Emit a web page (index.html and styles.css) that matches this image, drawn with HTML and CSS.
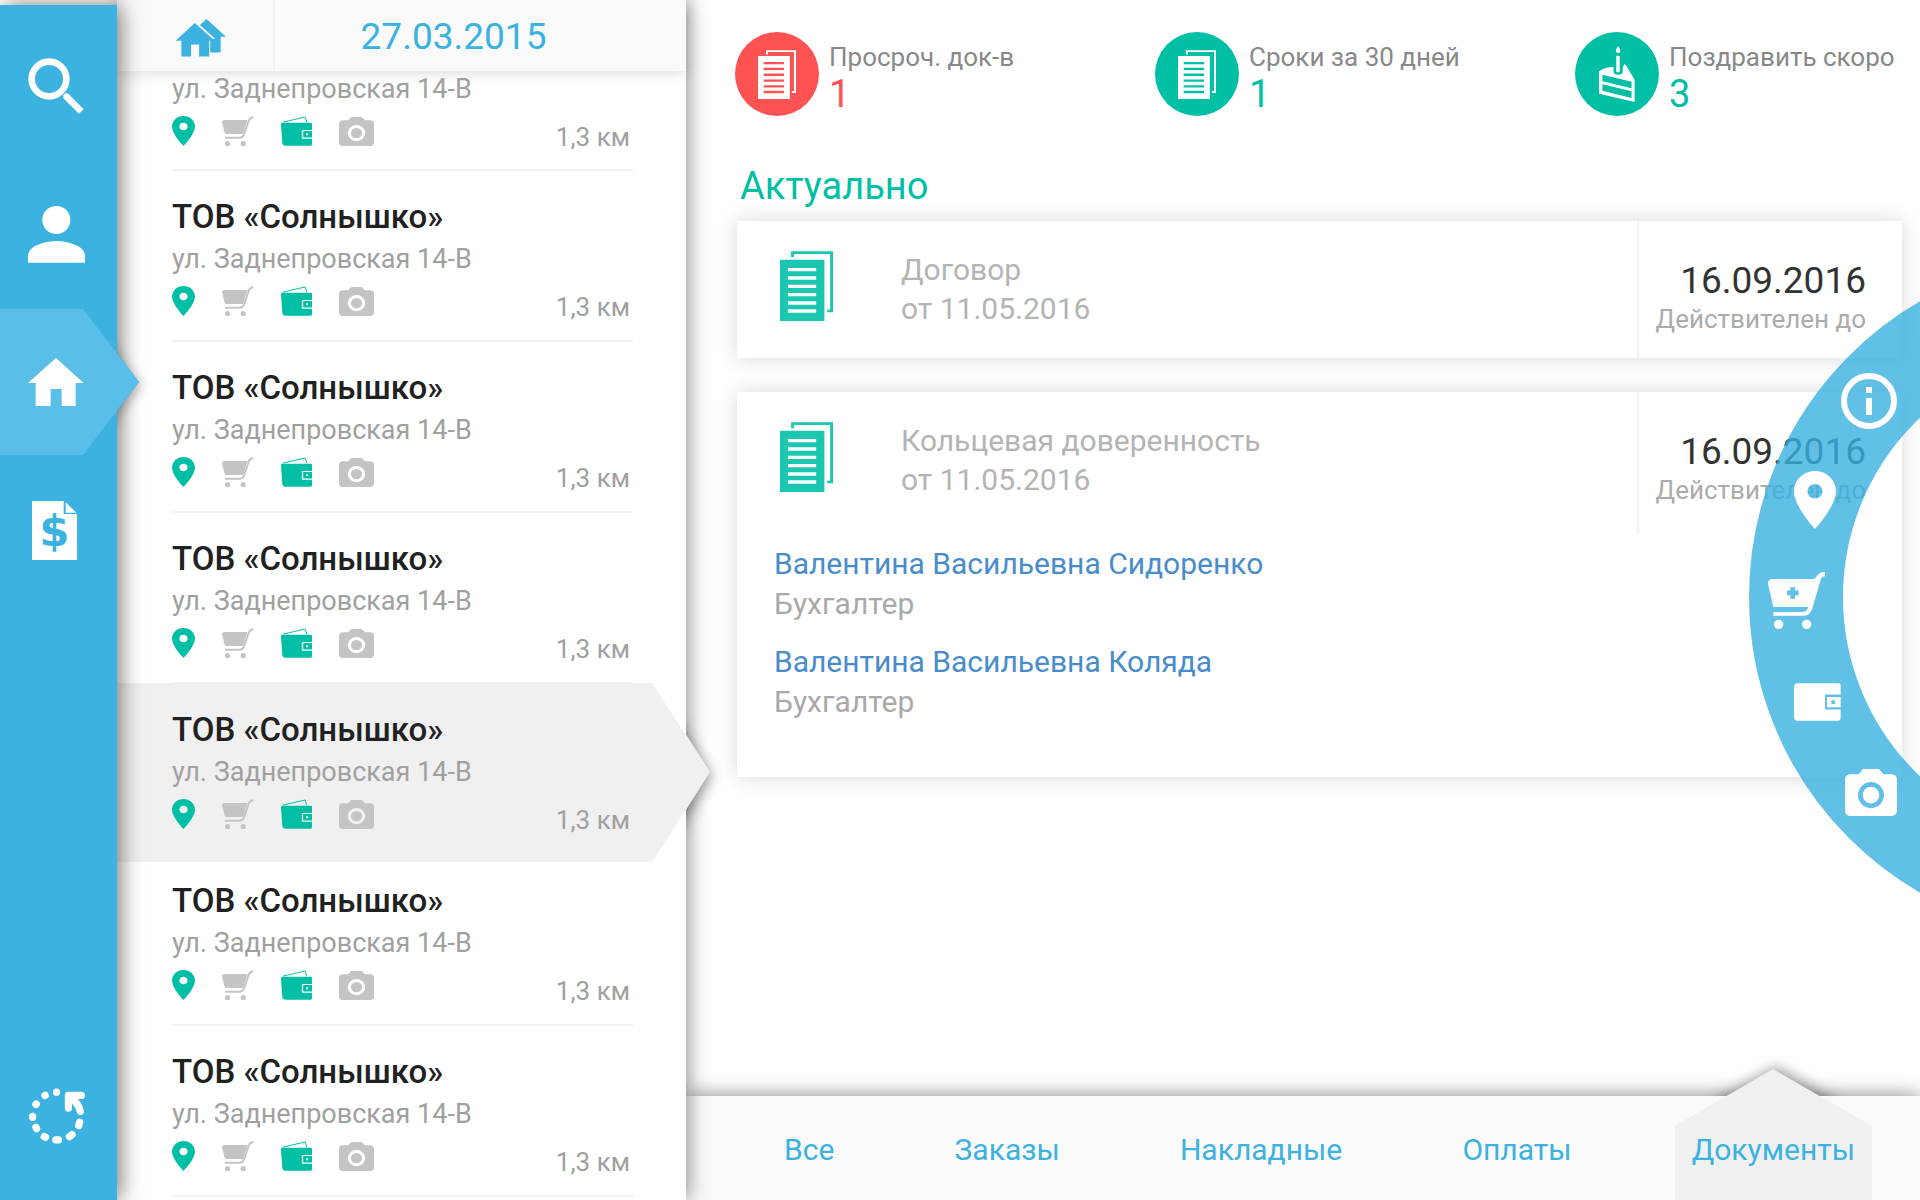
FILE: index.html
```html
<!DOCTYPE html>
<html lang="ru">
<head>
<meta charset="utf-8">
<meta name="viewport" content="width=device-width, initial-scale=1">
<title>Документы</title>
<link rel="stylesheet" href="styles.css">
</head>
<body>
<svg class="sprite" aria-hidden="true">
  <symbol id="pin" viewBox="5 2 14 20" preserveAspectRatio="none"><path d="M12 2C8.13 2 5 5.13 5 9c0 5.25 7 13 7 13s7-7.75 7-13c0-3.87-3.13-7-7-7zm0 9.5c-1.38 0-2.5-1.12-2.5-2.5s1.12-2.5 2.5-2.5 2.5 1.12 2.5 2.5-1.12 2.5-2.5 2.5z"/></symbol>
  <symbol id="cart" viewBox="664 348 99 92"><path d="M674 360H744L731 403H680Q675 403 674 399L666 368Q666 360 674 360Z"/><path d="M762 352Q752 352 748 362L734 404Q730 415 720 415H675" fill="none" stroke="currentColor" stroke-width="6"/><circle cx="683" cy="433" r="8"/><circle cx="731" cy="433" r="8"/></symbol>
  <symbol id="wallet" viewBox="840 347 97 92"><path d="M846 368H932q4 0 4 4V390H905V417H936V434q0 4-4 4H855Q846 438 845 430L841 374Q840 368 846 368Z"/><path fill-rule="evenodd" d="M909 393h27v20h-27zM918 400v6h6v-6z"/><path d="M846 366L915 350L920 366" fill="none" stroke="currentColor" stroke-width="3"/></symbol>
  <symbol id="camera" viewBox="2 2 20 18" preserveAspectRatio="none"><path fill-rule="evenodd" d="M9 2L7.170 4H4c-1.100 0-2 .9-2 2v12c0 1.100.9 2 2 2h16c1.100 0 2-.9 2-2V6c0-1.100-.9-2-2-2h-3.170L15 2H9zM12 7a5 5 0 1 1 0 10a5 5 0 1 1 0-10z"/><circle cx="12" cy="12" r="3.200"/></symbol>
  <symbol id="docs" viewBox="168 122 148 210" preserveAspectRatio="none"><path fill-rule="evenodd" d="M168 148H292V332H168ZM190 173V183H269V173ZM190 198V208H269V198ZM190 223V233H269V223ZM190 248V258H269V248ZM190 273V283H269V273ZM190 297V307H269V297Z"/><path d="M203 141V127H312V302H300" fill="none" stroke="currentColor" stroke-width="8"/></symbol>
</svg>

<div class="app">
  <nav class="rail" aria-label="Разделы">
    <button class="rail-item" aria-label="Поиск"><svg width="56" height="56" viewBox="84 174 168 168"><circle cx="147" cy="237" r="52" fill="none" stroke="currentColor" stroke-width="20"/><path d="M190 284L198 279L205 281L251 328L237 341L190 295Z"/></svg></button>
    <button class="rail-item" aria-label="Профиль"><svg width="57" height="57" viewBox="84 624 171 171"><circle cx="169" cy="666" r="42"/><path d="M84 794V772Q86 747 130 734Q169 724 208 734Q253 747 255 772V794Z"/></svg></button>
    <button class="rail-item is-active" aria-label="Торговые точки" aria-current="page"><svg width="56" height="48" viewBox="85 204 168 144"><path d="M169 204L252 279H228V348H186V297H153V348H108V279H85Z"/></svg></button>
    <button class="rail-item" aria-label="Счета"><svg class="invoice" width="45" height="59" viewBox="96 633 135 177"><path d="M96 633H191V672H231V810H96Z"/><path d="M197 637L229 668H197Z"/><text class="dollar" x="163" y="768" text-anchor="middle">$</text></svg></button>
    <button class="rail-item rail-sync" aria-label="Синхронизация"><svg width="57" height="56" viewBox="86 145 172 168"><g fill="none" stroke="currentColor" stroke-width="22" stroke-linecap="round" stroke-linejoin="round"><path d="M208 205V167H247M216 174Q238 190 244 215"/><path d="M172 157v.1M137 167l1-.5M110 194l1-1M100 230v3M110 263l2 4M135 291l4 2M170 301h8M211 291l8-6M239 258l3-10"/></g></svg></button>
  </nav>

  <section class="outlets">
    <header class="outlets-head">
      <button class="outlets-all" aria-label="Все точки"><svg width="51" height="38" viewBox="528 56 152 113"><path d="M587 68L530 121H547V168H576V132H600V168H630V120L645 119Z"/><path d="M602 74L622 56L680 109H664V156H633V118L647 114Z"/></svg></button>
      <button class="outlets-date">27.03.2015</button>
    </header>
    <ul class="outlet-list">
      <li class="outlet is-cut"><p>ул. Заднепровская 14-В</p><div class="outlet-meta"><svg class="i-pin on"><use href="#pin"/></svg><svg class="i-cart"><use href="#cart"/></svg><svg class="i-wallet on"><use href="#wallet"/></svg><svg class="i-camera"><use href="#camera"/></svg><span>1,3 км</span></div></li>
      <li class="outlet"><h2>ТОВ «Солнышко»</h2><p>ул. Заднепровская 14-В</p><div class="outlet-meta"><svg class="i-pin on"><use href="#pin"/></svg><svg class="i-cart"><use href="#cart"/></svg><svg class="i-wallet on"><use href="#wallet"/></svg><svg class="i-camera"><use href="#camera"/></svg><span>1,3 км</span></div></li>
      <li class="outlet"><h2>ТОВ «Солнышко»</h2><p>ул. Заднепровская 14-В</p><div class="outlet-meta"><svg class="i-pin on"><use href="#pin"/></svg><svg class="i-cart"><use href="#cart"/></svg><svg class="i-wallet on"><use href="#wallet"/></svg><svg class="i-camera"><use href="#camera"/></svg><span>1,3 км</span></div></li>
      <li class="outlet"><h2>ТОВ «Солнышко»</h2><p>ул. Заднепровская 14-В</p><div class="outlet-meta"><svg class="i-pin on"><use href="#pin"/></svg><svg class="i-cart"><use href="#cart"/></svg><svg class="i-wallet on"><use href="#wallet"/></svg><svg class="i-camera"><use href="#camera"/></svg><span>1,3 км</span></div></li>
      <li class="outlet is-selected"><h2>ТОВ «Солнышко»</h2><p>ул. Заднепровская 14-В</p><div class="outlet-meta"><svg class="i-pin on"><use href="#pin"/></svg><svg class="i-cart"><use href="#cart"/></svg><svg class="i-wallet on"><use href="#wallet"/></svg><svg class="i-camera"><use href="#camera"/></svg><span>1,3 км</span></div></li>
      <li class="outlet"><h2>ТОВ «Солнышко»</h2><p>ул. Заднепровская 14-В</p><div class="outlet-meta"><svg class="i-pin on"><use href="#pin"/></svg><svg class="i-cart"><use href="#cart"/></svg><svg class="i-wallet on"><use href="#wallet"/></svg><svg class="i-camera"><use href="#camera"/></svg><span>1,3 км</span></div></li>
      <li class="outlet"><h2>ТОВ «Солнышко»</h2><p>ул. Заднепровская 14-В</p><div class="outlet-meta"><svg class="i-pin on"><use href="#pin"/></svg><svg class="i-cart"><use href="#cart"/></svg><svg class="i-wallet on"><use href="#wallet"/></svg><svg class="i-camera"><use href="#camera"/></svg><span>1,3 км</span></div></li>
    </ul>
  </section>

  <main class="main">
    <div class="content">
      <ul class="stats">
        <li class="stat is-overdue"><span class="badge"><svg width="38" height="49"><use href="#docs"/></svg></span><div><p>Просроч. док-в</p><strong>1</strong></div></li>
        <li class="stat"><span class="badge"><svg width="38" height="49"><use href="#docs"/></svg></span><div><p>Сроки за 30 дней</p><strong>1</strong></div></li>
        <li class="stat"><span class="badge"><svg width="36" height="56" viewBox="725 135 94 168" preserveAspectRatio="none"><path fill-rule="evenodd" d="M725 211Q740 198 763 197V212Q763 221 774 221Q787 221 787 212V200L791 190L795 192L818 236V303L725 278ZM734 221V241L810 262V242ZM734 250V269L810 291V271Z"/><rect x="770" y="164" width="9" height="50" rx="3"/><path d="M775 135q6 10 6 15q0 6-6 6q-6 0-6-6q0-5 6-15z"/></svg></span><div><p>Поздравить скоро</p><strong>3</strong></div></li>
      </ul>
      <h1>Актуально</h1>
      <article class="card">
        <div class="card-head">
          <svg class="card-icon" width="53" height="70"><use href="#docs"/></svg>
          <div class="card-title"><h3>Договор</h3><p>от 11.05.2016</p></div>
          <div class="valid"><time>16.09.2016</time><span>Действителен до</span></div>
        </div>
      </article>
      <article class="card">
        <div class="card-head">
          <svg class="card-icon" width="53" height="70"><use href="#docs"/></svg>
          <div class="card-title"><h3>Кольцевая доверенность</h3><p>от 11.05.2016</p></div>
          <div class="valid"><time>16.09.2016</time><span>Действителен до</span></div>
        </div>
        <ul class="people">
          <li><a href="#">Валентина Васильевна Сидоренко</a><span>Бухгалтер</span></li>
          <li><a href="#">Валентина Васильевна Коляда</a><span>Бухгалтер</span></li>
        </ul>
      </article>
    </div>
    <nav class="tabs" aria-label="Фильтр">
      <a href="#">Все</a>
      <a href="#">Заказы</a>
      <a href="#">Накладные</a>
      <a href="#">Оплаты</a>
      <a href="#" class="is-active" aria-current="page">Документы</a>
    </nav>
  </main>

  <div class="radial">
    <div class="ring"></div>
    <button class="r-info" aria-label="Информация"><svg width="57" height="57" viewBox="0 0 57 57"><circle cx="28" cy="28" r="25" fill="none" stroke="currentColor" stroke-width="6"/><path d="M25 14h6v6h-6zM25 25h6v17h-6z"/></svg></button>
    <button class="r-pin" aria-label="На карте"><svg width="42" height="58"><use href="#pin"/></svg></button>
    <button class="r-cart" aria-label="Добавить заказ"><svg width="57" height="57" viewBox="324 594 171 160" preserveAspectRatio="none"><path fill-rule="evenodd" d="M338 614H460Q466 613 470 606Q478 594 495 594V606Q485 606 482 616L458 694Q450 717 432 717H340V706H428Q440 706 445 692H340L324 628Q324 614 338 614ZM391 637V646H381V659H391V669H405V659H416V646H405V637Z"/><ellipse cx="356" cy="741" rx="14" ry="13"/><ellipse cx="440" cy="741" rx="14" ry="13"/></svg></button>
    <button class="r-wallet" aria-label="Оплата"><svg width="47" height="38" viewBox="403 904 141 108" preserveAspectRatio="none"><path d="M414 905H537q6 0 6 6V937H496V979H543V1005q0 6-6 6H414q-11 0-11-11V916q0-11 11-11z"/><path fill-rule="evenodd" d="M502 944h41v29h-41zM515 953v11h11v-11z"/></svg></button>
    <button class="r-camera" aria-label="Фото"><svg width="52" height="47"><use href="#camera"/></svg></button>
  </div>
</div>
</body>
</html>
```
FILE: styles.css
```css
* { box-sizing: border-box; }

body {
  margin: 0;
  font-family: Roboto, "Liberation Sans", sans-serif;
  background: #fff;
}

h1, h2, h3, p, ul { margin: 0; padding: 0; font-weight: 400; }
ul { list-style: none; }
a { text-decoration: none; }
svg { display: block; fill: currentColor; }
button {
  padding: 0;
  border: 0;
  background: none;
  font: inherit;
  color: inherit;
  cursor: pointer;
}
.sprite { position: absolute; width: 0; height: 0; }

.app {
  position: relative;
  display: grid;
  grid-template-columns: 117px 569px 1fr;
  height: 100vh;
  overflow: hidden;
}

/* Left rail */
.rail {
  z-index: 3;
  display: flex;
  flex-direction: column;
  margin-top: 5px;
  padding: 7px 0 10px;
  background: #3bb2df;
  color: #fff;
  box-shadow: 4px 0 20px rgba(0, 0, 0, .5);
}
.rail-item {
  position: relative;
  display: flex;
  align-items: center;
  height: 148px;
  padding-left: 28px;
}
.rail-item svg { position: relative; z-index: 1; }
.rail-item.is-active::before {
  content: "";
  position: absolute;
  inset: 1px -22px 1px 0;
  background: #59bee8;
  clip-path: polygon(0 0, 83px 0, 100% 50%, 83px 100%, 0 100%);
}
/* Arrow tip: its shadow shows only outside the rail */
.rail-item.is-active::after {
  content: "";
  position: absolute;
  top: 1px;
  left: 83px;
  border: solid transparent;
  border-width: 73px 0 73px 56px;
  border-left-color: #59bee8;
  filter: drop-shadow(2px 3px 6px rgba(0, 0, 0, .3));
  clip-path: inset(-20px -30px -20px 34px);
}
.rail-item .invoice { margin-left: 4px; }
.dollar { font: 700 130px "DejaVu Sans", sans-serif; fill: #3bb2df; }
.rail-sync { margin-top: auto; }

/* Outlet list */
.outlets {
  z-index: 2;
  min-height: 0;
  background: #fff;
  box-shadow: 2px 0 20px rgba(0, 0, 0, .45);
}
.outlets-head {
  position: relative;
  z-index: 1;
  display: flex;
  height: 71px;
  background: #fafafa;
  color: #3bb2df;
  box-shadow: 0 2px 14px rgba(0, 0, 0, .14);
}
.outlets-all {
  display: grid;
  place-items: center;
  width: 158px;
  padding: 4px 0 0 10px;
  border-right: 2px solid #f1f1f1;
}
.outlets-date { flex: 1; padding: 2px 54px 0 0; font-size: 37px; }
.outlet {
  position: relative;
  height: 171px;
  margin: 0 53px 0 55px;
  padding-top: 26px;
  border-bottom: 2px solid #f1f1f1;
}
.outlet.is-cut { height: 102px; margin-top: -2px; padding-top: 0; }
.outlet > * { position: relative; z-index: 1; }
.outlet h2 { margin-bottom: 2px; font-size: 33px; line-height: 40px; font-weight: 500; color: #212121; }
.outlet p { font-size: 27px; line-height: 40px; color: #a0a0a0; }
.outlet-meta {
  display: flex;
  align-items: center;
  height: 40px;
  margin-top: 2px;
  padding-right: 3px;
  color: #c5c4c5;
}
.outlet-meta .on { color: #00bfa5; }
.outlet-meta span {
  align-self: flex-end;
  margin-left: auto;
  font-size: 26px;
  line-height: 28px;
  color: #a0a0a0;
}
.i-pin { width: 23px; height: 30px; }
.i-cart { width: 33px; height: 30px; margin-left: 26px; }
.i-wallet { width: 33px; height: 30px; margin-left: 26px; }
.i-camera { width: 35px; height: 29px; margin-left: 26px; }
.outlet.is-selected { border-color: transparent; }
.outlet.is-selected::before {
  content: "";
  position: absolute;
  z-index: 0;
  inset: -1px -77px -9px -55px;
  background: #f0f0f0;
  clip-path: polygon(0 0, 535px 0, 100% 50%, 535px 100%, 0 100%);
}
/* Arrow tip: its shadow shows only over the main panel */
.outlet.is-selected::after {
  content: "";
  position: absolute;
  z-index: 0;
  top: -1px;
  right: -77px;
  border: solid transparent;
  border-width: 89px 0 90px 57px;
  border-left-color: #f0f0f0;
  filter: drop-shadow(2px 4px 7px rgba(0, 0, 0, .4));
  clip-path: inset(-20px -30px -20px 33px);
}

/* Main panel */
.main { display: flex; flex-direction: column; min-width: 0; }
.content { flex: 1; padding: 32px 18px 0 49px; }
.stats { display: grid; grid-template-columns: repeat(3, 420px); height: 84px; }
.stat { display: flex; gap: 10px; color: #00bfa5; white-space: nowrap; }
.badge {
  display: grid;
  place-items: center;
  width: 84px;
  height: 84px;
  border-radius: 50%;
  background: #00bfa5;
  color: #fff;
}
.stat p { padding-top: 9px; font-size: 26px; line-height: 33px; color: #888; }
.stat strong { display: block; font-size: 38px; line-height: 40px; font-weight: 400; }
.stat.is-overdue { color: #ff5252; }
.is-overdue .badge { background: #ff5252; }
h1 { margin: 46px 0 11px 5px; font-size: 38px; line-height: 48px; color: #00bfa5; }
.card {
  margin: 0 0 34px 2px;
  background: #fff;
  box-shadow: 0 0 20px rgba(0, 0, 0, .16);
}
.card-head { display: flex; height: 137px; }
.card-head:not(:last-child) { height: 142px; }
.card-icon { margin: 30px 68px 0 43px; color: #1bc7b0; }
.card-title { padding-top: 29px; font-size: 30px; line-height: 39px; color: #b4b4b4; }
.card h3 { font-size: inherit; }
.valid {
  display: flex;
  flex-direction: column;
  align-items: flex-end;
  width: 265px;
  margin-left: auto;
  padding: 39px 36px 0 0;
  border-left: 2px solid #f3f3f3;
}
.valid time { font-size: 37px; line-height: 41px; color: #333; }
.valid span { font-size: 26px; line-height: 36px; color: #ababab; }
.people { padding: 10px 37px 55px; font-size: 30px; line-height: 40px; }
.people li + li { margin-top: 18px; }
.people a { display: block; color: #488ccb; }
.people span { display: block; color: #a9a9a9; }

/* Bottom tabs */
.tabs {
  display: flex;
  justify-content: space-between;
  height: 104px;
  padding: 0 65px 0 98px;
  background: #fafafa;
  box-shadow: 0 -2px 18px rgba(0, 0, 0, .4);
  font-size: 30px;
  line-height: 108px;
}
.tabs a { position: relative; z-index: 0; color: #3bb2df; }
.tabs .is-active::before {
  content: "";
  position: absolute;
  z-index: -1;
  inset: -27px -17px 0;
  background: #f0f0f0;
  clip-path: polygon(50% 0, 100% 57px, 100% 100%, 0 100%, 0 57px);
}
/* Arrow tip: its shadow shows only above the bar */
.tabs .is-active::after {
  content: "";
  position: absolute;
  z-index: -1;
  top: -27px;
  left: 50%;
  margin-left: -98px;
  border: solid transparent;
  border-width: 0 98px 57px;
  border-bottom-color: #f0f0f0;
  filter: drop-shadow(3px -2px 7px rgba(0, 0, 0, .4));
  clip-path: inset(-30px -20px 30px);
}

/* Radial action menu floating over the right edge */
.radial {
  position: absolute;
  z-index: 4;
  top: 256px;
  right: 0;
  width: 171px;
  height: 682px;
  color: #fff;
}
.ring {
  position: absolute;
  top: 0;
  left: 0;
  width: 682px;
  height: 682px;
  border: 94px solid rgba(56, 176, 224, .8);
  border-radius: 50%;
}
.radial button { position: absolute; }
.r-info { left: 92px; top: 117px; }
.r-pin { left: 45px; top: 215px; }
.r-cart { left: 19px; top: 316px; }
.r-wallet { left: 45px; top: 427px; }
.r-camera { left: 96px; top: 513px; }
```
